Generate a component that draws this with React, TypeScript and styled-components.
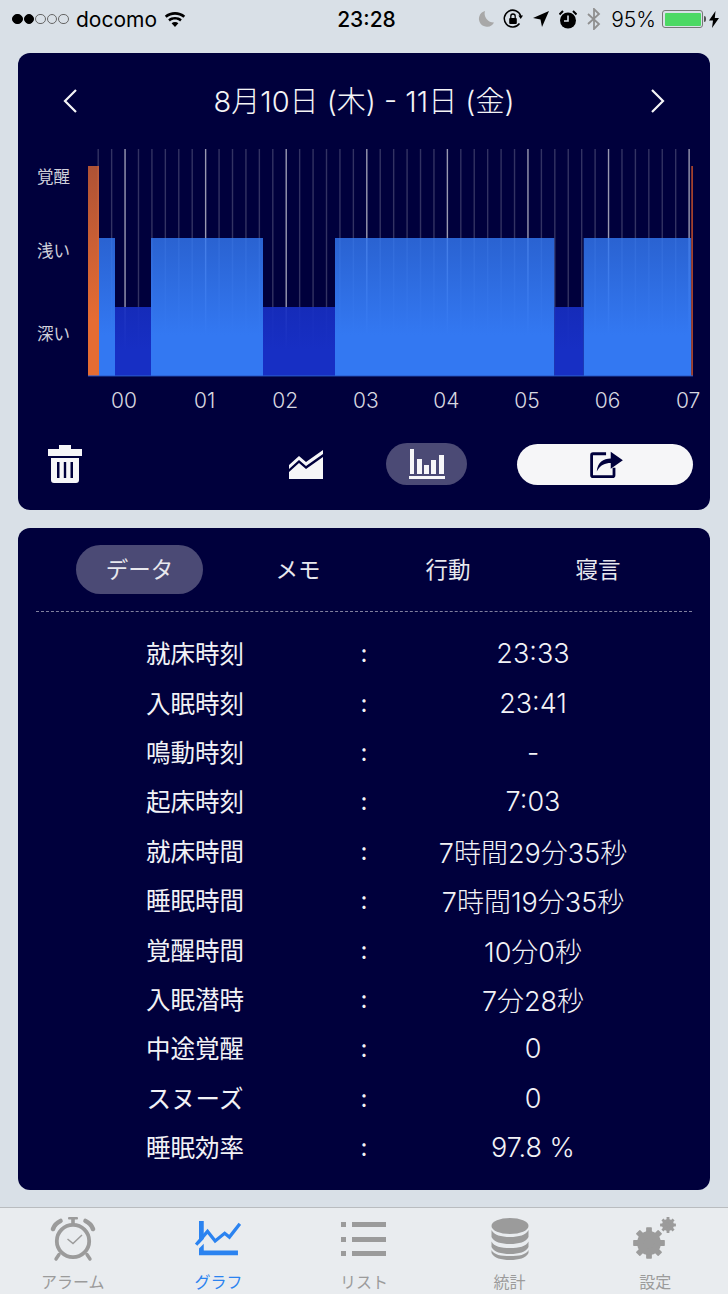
import React from 'react';
import styled, { createGlobalStyle } from 'styled-components';

const NAVY = '#00003c';
const GRAY = '#9b9b9b';
const BLUE = '#2b83f0';

const TICK_COUNT = 45;
const TICK_START = 98.2;
const TICK_STEP = 13.43;

const LIGHT_TOP = 238;
const DEEP_TOP = 307;
const AWAKE_TOP = 166;
const BOTTOM = 376;

const segments = [
  { x0: 99, x1: 115, kind: 'light' },
  { x0: 115, x1: 151, kind: 'deep' },
  { x0: 151, x1: 263, kind: 'light' },
  { x0: 263, x1: 335, kind: 'deep' },
  { x0: 335, x1: 554.3, kind: 'light' },
  { x0: 554.3, x1: 583.7, kind: 'deep' },
  { x0: 583.7, x1: 691.3, kind: 'light' },
];

const stages = [
  { label: '覚醒', y: 177 },
  { label: '浅い', y: 251 },
  { label: '深い', y: 334 },
];

const hours = ['00', '01', '02', '03', '04', '05', '06', '07'];

const rows = [
  ['就床時刻', '23:33'],
  ['入眠時刻', '23:41'],
  ['鳴動時刻', '-'],
  ['起床時刻', '7:03'],
  ['就床時間', '7時間29分35秒'],
  ['睡眠時間', '7時間19分35秒'],
  ['覚醒時間', '10分0秒'],
  ['入眠潜時', '7分28秒'],
  ['中途覚醒', '0'],
  ['スヌーズ', '0'],
  ['睡眠効率', '97.8 %'],
];

const tabs = ['データ', 'メモ', '行動', '寝言'];

const SleepChart = () => (
  <ChartSvg viewBox="18 140 692 275" width={692} height={275}>
    <defs>
      <linearGradient id="lightFill" gradientUnits="userSpaceOnUse" x1="0" y1={LIGHT_TOP} x2="0" y2="335">
        <stop offset="0" stopColor="#3378f2" stopOpacity="0.82" />
        <stop offset="1" stopColor="#3378f2" stopOpacity="1" />
      </linearGradient>
      <linearGradient id="deepFill" gradientUnits="userSpaceOnUse" x1="0" y1={DEEP_TOP} x2="0" y2="350">
        <stop offset="0" stopColor="#172fc4" stopOpacity="0.92" />
        <stop offset="1" stopColor="#172fc4" stopOpacity="1" />
      </linearGradient>
      <linearGradient id="awakeFill" gradientUnits="userSpaceOnUse" x1="0" y1={AWAKE_TOP} x2="0" y2="320">
        <stop offset="0" stopColor="#e56c33" stopOpacity="0.76" />
        <stop offset="1" stopColor="#e56c33" stopOpacity="1" />
      </linearGradient>
    </defs>

    {Array.from({ length: TICK_COUNT }, (_, i) => {
      const x = TICK_START + i * TICK_STEP;
      const major = i % 6 === 2;
      return (
        <line
          key={i}
          x1={x}
          x2={x}
          y1={149}
          y2={BOTTOM}
          stroke="#fff"
          strokeOpacity={major ? 0.6 : 0.2}
          strokeWidth={1.4}
        />
      );
    })}

    <rect x={88} y={AWAKE_TOP} width={11} height={BOTTOM - AWAKE_TOP} fill="url(#awakeFill)" />
    {segments.map((s) => (
      <rect
        key={s.x0}
        x={s.x0}
        y={s.kind === 'light' ? LIGHT_TOP : DEEP_TOP}
        width={s.x1 - s.x0}
        height={BOTTOM - (s.kind === 'light' ? LIGHT_TOP : DEEP_TOP)}
        fill={s.kind === 'light' ? 'url(#lightFill)' : 'url(#deepFill)'}
      />
    ))}
    <rect x={691.3} y={AWAKE_TOP} width={1.6} height={BOTTOM - AWAKE_TOP} fill="#b5492c" />
    <rect x={88} y={375.4} width={605} height={1} fill="#2a5ccc" />

    {stages.map((s) => (
      <StageLabel key={s.label} x={37} y={s.y + 6}>
        {s.label}
      </StageLabel>
    ))}
    {hours.map((h, i) => (
      <HourLabel key={h} x={124 + i * 80.6} y={408}>
        {h}
      </HourLabel>
    ))}
  </ChartSvg>
);

const Gear = ({ cx, cy, r, hole, teeth, fill }: { cx: number; cy: number; r: number; hole: number; teeth: number; fill: string }) => (
  <g fill={fill}>
    {Array.from({ length: teeth }, (_, i) => (
      <rect
        key={i}
        x={cx - r * 0.24}
        y={cy - r * 1.32}
        width={r * 0.48}
        height={r * 2.64}
        rx={r * 0.06}
        transform={`rotate(${(i * 180) / teeth} ${cx} ${cy})`}
      />
    ))}
    <path
      fillRule="evenodd"
      d={`M${cx - r} ${cy}a${r} ${r} 0 1 0 ${r * 2} 0a${r} ${r} 0 1 0 ${-r * 2} 0ZM${cx - hole} ${cy}a${hole} ${hole} 0 1 1 ${hole * 2} 0a${hole} ${hole} 0 1 1 ${-hole * 2} 0Z`}
    />
  </g>
);

const AlarmIcon = () => (
  <svg width="48" height="46" viewBox="0 0 48 46">
    <path d="M4 13 Q6 7.5 11.5 5 M44 13 Q42 7.5 36.5 5" fill="none" stroke={GRAY} strokeWidth="4.6" strokeLinecap="round" />
    <rect x="19" y="1" width="10" height="2.6" rx="1" fill={GRAY} />
    <rect x="22.2" y="3" width="3.6" height="5" fill={GRAY} />
    <circle cx="24" cy="25" r="16.2" fill="none" stroke={GRAY} strokeWidth="3.8" />
    <path d="M10 38.5 L7 43 M38 38.5 L41 43" stroke={GRAY} strokeWidth="3.4" strokeLinecap="round" />
    <path d="M18.5 23 L24 27.5 L33 19" fill="none" stroke={GRAY} strokeWidth="1.5" />
  </svg>
);

const GraphIcon = () => (
  <svg width="46" height="38" viewBox="0 0 48 40">
    <g fill={BLUE}>
      <path d="M4 1 H9 V20 L4 25 Z" />
      <path d="M4 30 L9 25 V32 H45 V37 H4 Z" />
    </g>
    <path d="M1 26 L13 12 L21 22 L31 14 L36 18 L47 4" fill="none" stroke={BLUE} strokeWidth="3.4" />
  </svg>
);

const ListIcon = () => (
  <svg width="48" height="36" viewBox="0 0 48 36" fill={GRAY}>
    <rect x="1" y="1" width="5" height="5" />
    <rect x="1" y="16" width="5" height="5" />
    <rect x="1" y="30" width="5" height="5" />
    <rect x="12" y="1" width="34" height="5" />
    <rect x="12" y="16" width="34" height="5" />
    <rect x="12" y="30" width="34" height="5" />
  </svg>
);

const DatabaseIcon = () => (
  <svg width="38" height="42" viewBox="0 0 38 42" fill={GRAY}>
    <ellipse cx="19" cy="8" rx="18.5" ry="8" />
    <path d="M0.5 12 C3 17 10 19 19 19 S35 17 37.5 12 V19 C35 24 28 26 19 26 S3 24 0.5 19Z" />
    <path d="M0.5 22.5 C3 27.5 10 29 19 29 S35 27.5 37.5 22.5 V28 C35 33 28 35 19 35 S3 33 0.5 28Z" transform="translate(0 1)" />
    <path d="M0.5 32 C3 37 10 38 19 38 S35 37 37.5 32 V35 C35 40 28 42 19 42 S3 40 0.5 35Z" />
  </svg>
);

const GearsIcon = () => (
  <svg width="46" height="46" viewBox="0 0 46 46">
    <Gear cx={17} cy={27} r={12} hole={5.2} teeth={4} fill={GRAY} />
    <Gear cx={36} cy={9} r={6} hole={2.8} teeth={4} fill={GRAY} />
  </svg>
);

const navItems = [
  { label: 'アラーム', icon: <AlarmIcon /> },
  { label: 'グラフ', icon: <GraphIcon />, active: true },
  { label: 'リスト', icon: <ListIcon /> },
  { label: '統計', icon: <DatabaseIcon /> },
  { label: '設定', icon: <GearsIcon /> },
];

const StatusBar = () => (
  <StatusRow>
    <StatusLeft>
      <Signal>
        {[1, 1, 0, 0, 0].map((on, i) => (
          <SignalDot key={i} $on={!!on} />
        ))}
      </Signal>
      <span>docomo</span>
      <svg width="22" height="16" viewBox="0 0 22 16" fill="#000">
        <path d="M11 16 L7.6 12.2 C9.4 10.7 12.6 10.7 14.4 12.2Z" />
        <path d="M5.9 10.4 L4.2 8.5 C7.9 5.3 14.1 5.3 17.8 8.5 L16.1 10.4 C13.2 8 8.8 8 5.9 10.4Z" />
        <path d="M2.6 6.7 L0.8 4.8 C6.4 -0.2 15.6 -0.2 21.2 4.8 L19.4 6.7 C14.7 2.6 7.3 2.6 2.6 6.7Z" />
      </svg>
    </StatusLeft>
    <StatusTime>23:28</StatusTime>
    <StatusRight>
      <MoonIcon width="18" height="18" viewBox="0 0 18 18" fill="#a8a8a8">
        <path d="M8 1 A8 8 0 1 0 17 12.5 A9 9 0 0 1 8 1Z" />
      </MoonIcon>
      <svg width="20" height="20" viewBox="0 0 20 20">
        <path d="M16.5 14.5 A8.4 8.4 0 1 1 17.7 7" fill="none" stroke="#000" strokeWidth="1.5" />
        <path d="M15.4 6.6 H20 L17.7 10Z" fill="#000" />
        <rect x="6.2" y="9" width="7.6" height="6" rx="1" fill="#000" />
        <path d="M7.8 9 V7.2 A2.2 2.2 0 0 1 12.2 7.2 V9" fill="none" stroke="#000" strokeWidth="1.3" />
      </svg>
      <svg width="16" height="16" viewBox="0 0 16 16" fill="#000">
        <path d="M16 0 L9 16 L7.5 8.5 L0 7Z" />
      </svg>
      <svg width="18" height="19" viewBox="0 0 18 19">
        <circle cx="9" cy="10.5" r="8" fill="#000" />
        <path d="M9 5.5 V11 H5" fill="none" stroke="#d9e0e7" strokeWidth="1.6" />
        <path d="M0.5 4.5 L4 1 M17.5 4.5 L14 1" stroke="#000" strokeWidth="2" />
      </svg>
      <svg width="14" height="22" viewBox="0 0 14 22">
        <path d="M1 6 L12 16 L7 21 V1 L12 6 L1 16" fill="none" stroke="#8f8f8f" strokeWidth="1.8" />
      </svg>
      <Percent>95%</Percent>
      <Battery>
        <BatteryFill />
      </Battery>
      <svg width="10" height="17" viewBox="0 0 10 17" fill="#000">
        <path d="M6.5 0 L0 9.5 H4 L3 17 L10 7 H5.8Z" />
      </svg>
    </StatusRight>
  </StatusRow>
);

const App = () => {
  return (
    <Page>
      <GlobalStyle />
      <StatusBar />
      <Cards>
        <GraphCard>
          <DateHeader>
            <svg width="16" height="26" viewBox="0 0 16 26">
              <path d="M14 2 L3 13 L14 24" fill="none" stroke="#f4f4f6" strokeWidth="2.2" />
            </svg>
            <DateTitle>8月10日 (木) - 11日 (金)</DateTitle>
            <svg width="16" height="26" viewBox="0 0 16 26">
              <path d="M2 2 L13 13 L2 24" fill="none" stroke="#f4f4f6" strokeWidth="2.2" />
            </svg>
          </DateHeader>
          <SleepChart />
          <Toolbar>
            <svg width="34" height="38" viewBox="0 0 34 38" fill="#f6f6f8">
              <rect x="11" y="0" width="12" height="5" />
              <rect x="0" y="4" width="34" height="7" />
              <path
                fillRule="evenodd"
                d="M3 13 H31 V35 Q31 38 28 38 H6 Q3 38 3 35Z M9 17 V33 H11.5 V17Z M15.8 17 V33 H18.2 V17Z M22.5 17 V33 H25 V17Z"
              />
            </svg>
            <ChartToggle>
              <svg width="35" height="29" viewBox="0 0 35 29" fill="#f6f6f8">
                <path d="M0 15 L10 6 L17 12 L34 0 V4 L17 16 L10 10 L0 19Z" />
                <path d="M0 22 L10 13 L17 19 L34 7 V29 H0Z" />
              </svg>
              <TogglePill>
                <svg width="36" height="30" viewBox="0 0 36 30" fill="#f6f6f8">
                  <rect x="1" y="0" width="4" height="25" />
                  <rect x="8" y="10" width="5" height="15" />
                  <rect x="15" y="16" width="5" height="9" />
                  <rect x="22" y="11" width="5" height="14" />
                  <rect x="30" y="6" width="5" height="19" />
                  <rect x="0" y="27" width="36" height="3" />
                </svg>
              </TogglePill>
            </ChartToggle>
            <ShareButton>
              <ShareIcon width="34" height="28" viewBox="0 0 36 30" fill="none">
                <path d="M17 4 H3 Q1.5 4 1.5 5.5 V27 Q1.5 28.5 3 28.5 H24 Q25.5 28.5 25.5 27 V19" stroke={NAVY} strokeWidth="3" />
                <path d="M7 23 C8 13 14 9 22 9 V2 L35 11 L22 20 V14 C16 14 11 16 7 23Z" fill={NAVY} />
              </ShareIcon>
            </ShareButton>
          </Toolbar>
        </GraphCard>

        <DataCard>
          <TabRow>
            {tabs.map((tab, i) => (
              <Tab key={tab} $active={i === 0}>
                <TabText>{tab}</TabText>
              </Tab>
            ))}
          </TabRow>
          <DataList>
            {rows.map(([label, value]) => (
              <DataRow key={label}>
                <DataLabel>{label}</DataLabel>
                <Colon>:</Colon>
                <DataValue>{value}</DataValue>
              </DataRow>
            ))}
          </DataList>
        </DataCard>
      </Cards>

      <BottomNav>
        {navItems.map((item) => (
          <NavItem key={item.label} $active={!!item.active}>
            <NavIcon>{item.icon}</NavIcon>
            <NavLabel>{item.label}</NavLabel>
          </NavItem>
        ))}
      </BottomNav>
    </Page>
  );
};

export default App;

const GlobalStyle = createGlobalStyle`
  * {
    box-sizing: border-box;
  }

  html, body {
    margin: 0;
    padding: 0;
    background: #d9e0e7;
  }

  svg {
    display: block;
    flex-shrink: 0;
  }
`;

const Page = styled.div`
  width: 728px;
  height: 1294px;
  display: flex;
  flex-direction: column;
  overflow: hidden;
  background: #d9e0e7;
  font-family: Inter, 'Noto Sans CJK JP', sans-serif;
`;

const StatusRow = styled.div`
  height: 53px;
  flex-shrink: 0;
  padding: 0 9px 15px 12px;
  display: grid;
  grid-template-columns: 1fr auto 1fr;
  align-items: center;
  color: #000;
  font-size: 21px;
`;

const StatusLeft = styled.div`
  display: flex;
  align-items: center;
  gap: 7px;
`;

const Signal = styled.div`
  display: flex;
  gap: 1px;
`;

const SignalDot = styled.span<{ $on: boolean }>`
  width: 10.6px;
  height: 10.6px;
  border-radius: 50%;
  border: 1px solid ${({ $on }) => ($on ? '#000' : '#666')};
  background: ${({ $on }) => ($on ? '#000' : 'transparent')};
`;

const StatusTime = styled.div`
  font-weight: 500;
  margin-left: 2px;
`;

const StatusRight = styled.div`
  display: flex;
  align-items: center;
  justify-content: flex-end;
  gap: 10px;
`;

const MoonIcon = styled.svg`
  margin-right: -2px;
`;

const Percent = styled.span`
  margin-left: 0;
  font-weight: 300;
`;

const Battery = styled.div`
  position: relative;
  width: 41px;
  height: 18px;
  margin-left: -4px;
  margin-right: -4px;
  padding: 1.5px;
  border: 1px solid #777;
  border-radius: 3px;

  &::after {
    content: '';
    position: absolute;
    right: -4px;
    top: 5px;
    width: 2.5px;
    height: 6px;
    background: #555;
    border-radius: 0 2px 2px 0;
  }
`;

const BatteryFill = styled.div`
  height: 100%;
  background: #4cd964;
  border-radius: 1px;
`;

const Cards = styled.div`
  flex: 1;
  display: flex;
  flex-direction: column;
  gap: 18px;
  padding: 0 18px;
`;

const GraphCard = styled.section`
  height: 457px;
  border-radius: 12px;
  background: ${NAVY};
`;

const DateHeader = styled.div`
  height: 87px;
  padding: 9px 44px 0 44px;
  display: flex;
  align-items: center;
  justify-content: space-between;
`;

const DateTitle = styled.h1`
  margin: 0 0 4px;
  color: #f4f4f6;
  font-size: 29px;
  font-weight: 300;
  white-space: nowrap;
`;

const ChartSvg = styled.svg`
  display: block;
`;

const StageLabel = styled.text`
  fill: #d0d0da;
  font-size: 16.5px;
`;

const HourLabel = styled.text`
  fill: #d8d8e0;
  font-size: 21px;
  font-weight: 300;
  text-anchor: middle;
`;

const Toolbar = styled.div`
  height: 95px;
  padding: 28px 17px 25px 30px;
  display: flex;
  align-items: center;
`;

const ChartToggle = styled.div`
  margin-left: 207px;
  display: flex;
  align-items: center;
  gap: 62px;
`;

const TogglePill = styled.div`
  width: 81px;
  height: 42px;
  border-radius: 21px;
  background: #4b4a75;
  display: flex;
  align-items: center;
  justify-content: center;
`;

const ShareButton = styled.div`
  width: 176px;
  height: 41px;
  margin-left: auto;
  border-radius: 21px;
  background: #f6f6f8;
  display: flex;
  align-items: center;
  justify-content: center;
`;

const ShareIcon = styled.svg`
  margin-left: 3px;
`;

const DataCard = styled.section`
  height: 662px;
  border-radius: 12px;
  background: ${NAVY};
  padding: 17px 18px 0 18px;
`;

const TabRow = styled.div`
  height: 67px;
  padding: 0 0 18px 20px;
  display: grid;
  grid-template-columns: 167px repeat(3, 150px);
  justify-items: center;
  align-items: center;
  border-bottom: 1px dashed rgba(255, 255, 255, 0.5);
`;

const Tab = styled.div<{ $active: boolean }>`
  width: 127px;
  height: 49px;
  border-radius: 25px;
  display: flex;
  align-items: center;
  justify-content: center;
  color: #e8e8ee;
  font-size: 22.5px;
  background: ${({ $active }) => ($active ? '#4b4a75' : 'transparent')};
`;

const TabText = styled.span`
  margin-bottom: 3px;
`;

const DataList = styled.div`
  padding-top: 17px;
  margin: 0 -18px;
`;

const DataRow = styled.div`
  height: 49.4px;
  padding: 0 16px 0 16px;
  display: grid;
  grid-template-columns: 1fr 16px 1fr;
  align-items: center;
  justify-items: center;
  color: #f2f2f6;
`;

const DataLabel = styled.div`
  font-size: 24.5px;
  margin-bottom: 2px;
`;

const Colon = styled.div`
  font-size: 24px;
`;

const DataValue = styled.div`
  font-size: 27px;
  font-weight: 300;
`;

const BottomNav = styled.nav`
  height: 87px;
  flex-shrink: 0;
  display: grid;
  grid-template-columns: repeat(5, 1fr);
  border-top: 1px solid #b9bcbf;
  background: #e9ecef;
`;

const NavItem = styled.div<{ $active: boolean }>`
  display: flex;
  flex-direction: column;
  align-items: center;
  color: ${({ $active }) => ($active ? BLUE : GRAY)};
`;

const NavIcon = styled.div`
  height: 62px;
  display: flex;
  align-items: center;
  justify-content: center;
`;

const NavLabel = styled.div`
  font-size: 16px;
  line-height: 24px;
`;
